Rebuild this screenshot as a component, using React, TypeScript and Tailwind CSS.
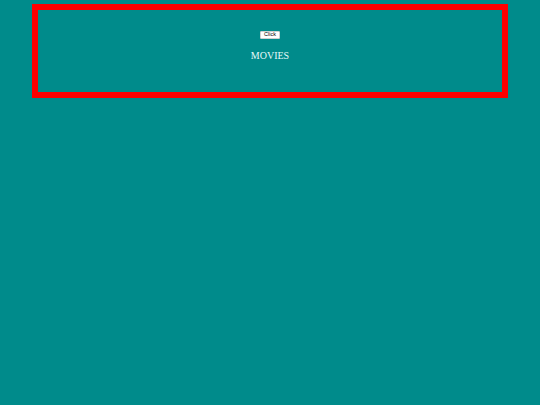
export default function App() {
  return (
    <div className="min-h-screen w-full bg-[#008b8b] pt-[4px] font-['Liberation_Serif',serif]">
      <div className="mx-[32px] h-[94px] w-[476px] border-[6px] border-[#ff0000] flex flex-col items-center pt-[21px]">
        <button className="h-[8px] px-[3px] bg-white border border-[#cfcfcf] rounded-[1px] text-[5.5px] leading-none text-black font-['Liberation_Sans',sans-serif]">
          Click
        </button>
        <p className="mt-[12px] text-[10px] leading-none text-[#e8fafa]">MOVIES</p>
      </div>
    </div>
  );
}
